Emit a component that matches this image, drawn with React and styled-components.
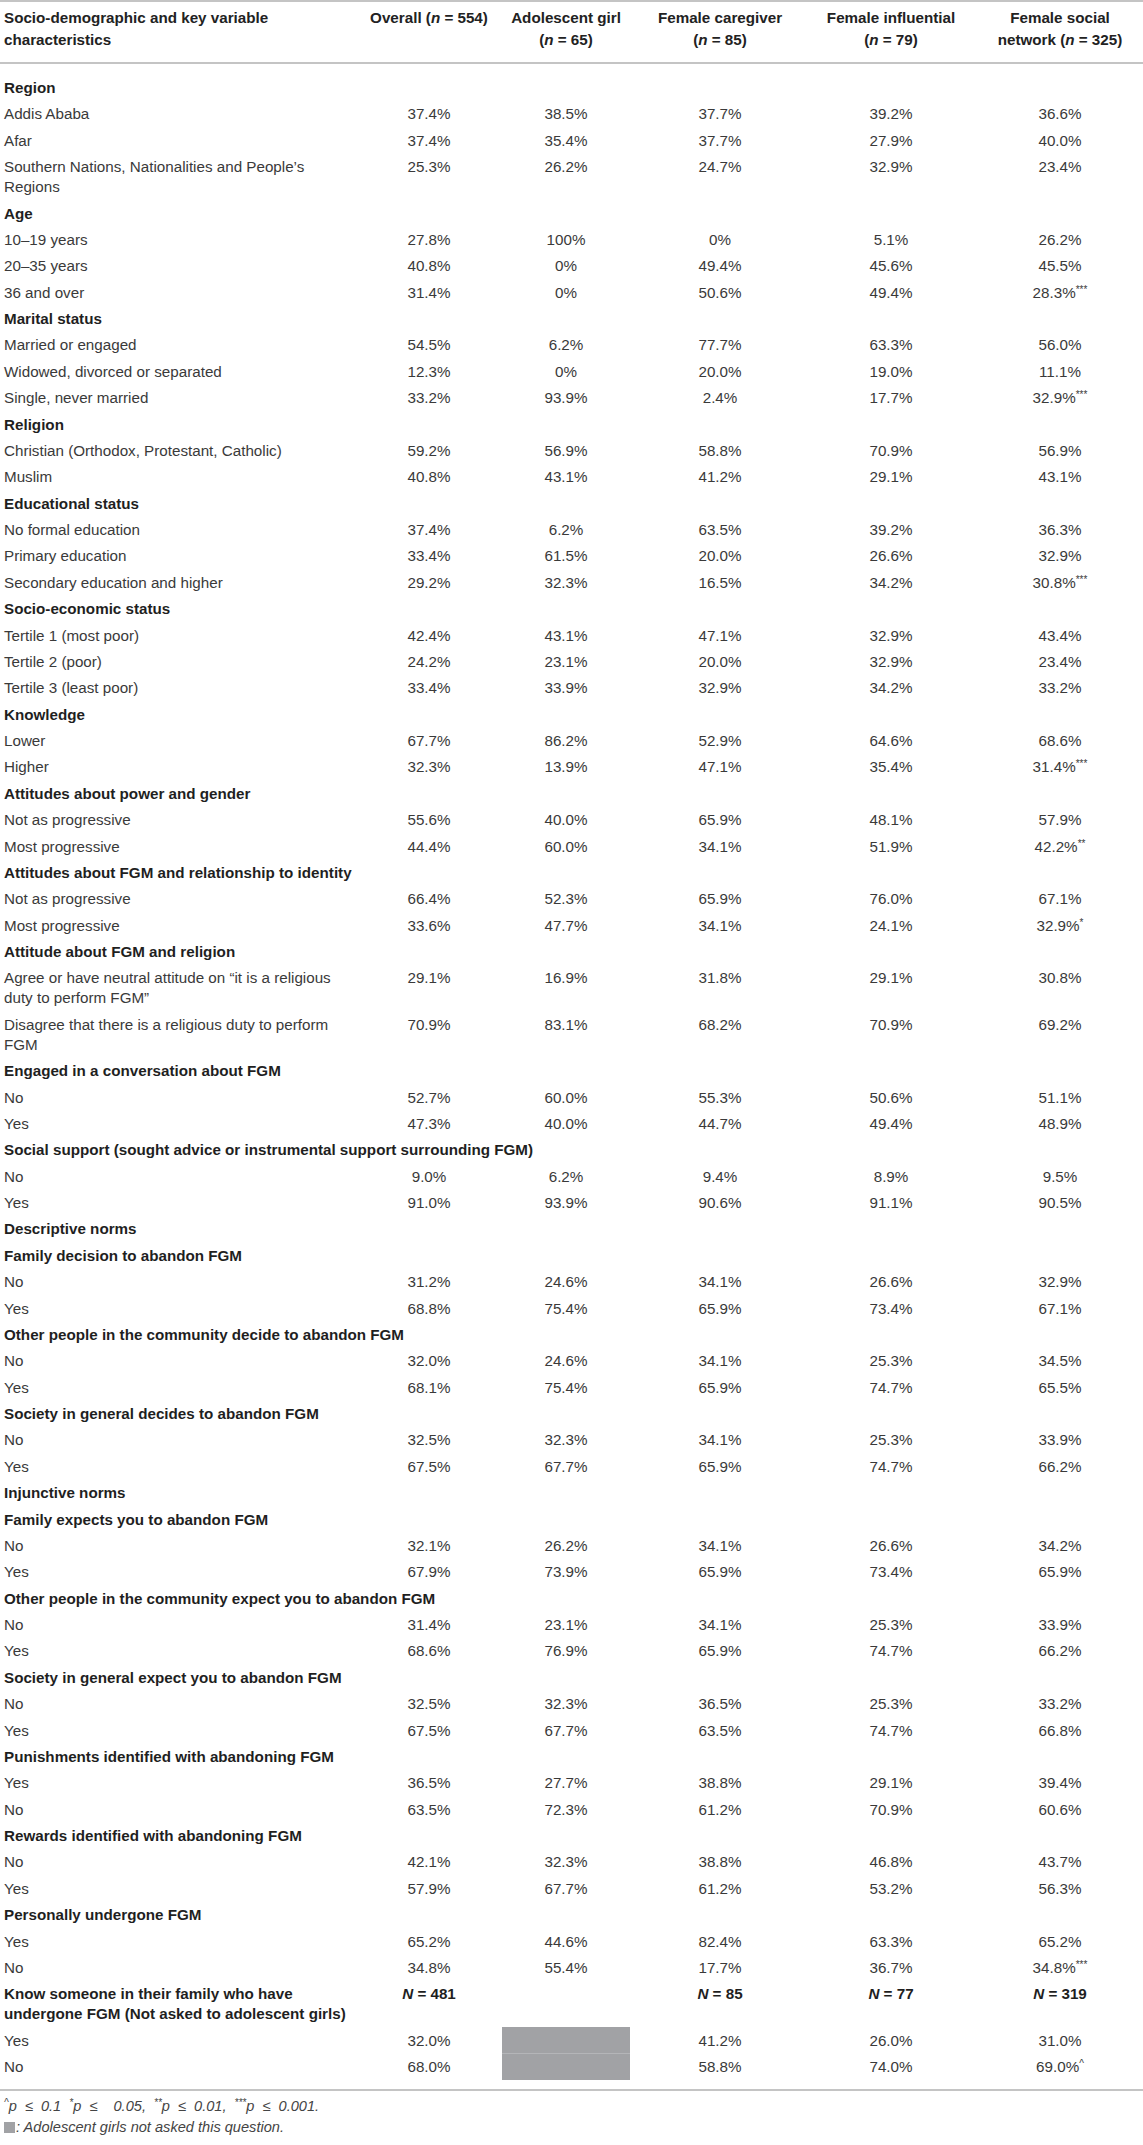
import React from "react";
import styled, { createGlobalStyle } from "styled-components";

const GlobalStyle = createGlobalStyle`
  html, body {
    margin: 0;
    padding: 0;
    background: #fff;
  }
  body {
    font-family: "Liberation Sans", Arial, sans-serif;
    color: #333;
  }
`;

const Page = styled.div`
  width: 1143px;
`;

const Table = styled.table`
  width: 1143px;
  table-layout: fixed;
  border-collapse: collapse;
  font-size: 15.2px;
  tbody tr:first-child td {
    padding-top: 14px;
  }
  tbody tr:last-child td {
    padding-bottom: 9px;
  }
  tbody {
    border-bottom: 2px solid #c4c4c4;
  }
`;

const HeadRow = styled.tr`
  border-top: 2px solid #c4c4c4;
  border-bottom: 2px solid #c4c4c4;
`;

const HeadCell = styled.th`
  font-weight: bold;
  color: #222;
  line-height: 22px;
  padding: 5px 4px 11px;
  vertical-align: top;
  text-align: ${p => (p.left ? "left" : "center")};
  white-space: nowrap;
`;

const Cell = styled.td`
  line-height: 20px;
  padding: 3.2px 4px;
  vertical-align: top;
  text-align: ${p => (p.left ? "left" : "center")};
  white-space: nowrap;
  color: #3a3a3a;
  font-weight: ${p => (p.bold ? "bold" : "normal")};
  ${p => p.bold && "color: #1f1f1f;"}
`;

const ShadeCell = styled.td`
  padding: 0 5px;
  vertical-align: top;
`;

const Shade = styled.div`
  height: 26.4px;
  background: #a1a2a5;
  box-shadow: inset 0 ${p => (p.top ? "-1px" : "0")} 0 #b4b5b8;
`;

const Sup = styled.span`
  font-size: 10px;
  line-height: 0;
  vertical-align: 5px;
`;

const Em = styled.i`
  font-style: italic;
`;

const Notes = styled.div`
  padding: 5px 4px 0;
  font-style: italic;
  font-size: 14.6px;
  line-height: 21px;
  color: #444;
`;

const NoteLine = styled.div`
  word-spacing: ${p => p.spread || 0}px;
`;

const Swatch = styled.span`
  display: inline-block;
  width: 11px;
  height: 11px;
  background: #a1a2a5;
  margin-right: 1px;
  vertical-align: -1px;
`;

const sections = [
  ["Region", [
    ["Addis Ababa", "37.4%", "38.5%", "37.7%", "39.2%", "36.6%"],
    ["Afar", "37.4%", "35.4%", "37.7%", "27.9%", "40.0%"],
    [["Southern Nations, Nationalities and People’s", "Regions"], "25.3%", "26.2%", "24.7%", "32.9%", "23.4%"],
  ]],
  ["Age", [
    ["10–19 years", "27.8%", "100%", "0%", "5.1%", "26.2%"],
    ["20–35 years", "40.8%", "0%", "49.4%", "45.6%", "45.5%"],
    ["36 and over", "31.4%", "0%", "50.6%", "49.4%", "28.3%***"],
  ]],
  ["Marital status", [
    ["Married or engaged", "54.5%", "6.2%", "77.7%", "63.3%", "56.0%"],
    ["Widowed, divorced or separated", "12.3%", "0%", "20.0%", "19.0%", "11.1%"],
    ["Single, never married", "33.2%", "93.9%", "2.4%", "17.7%", "32.9%***"],
  ]],
  ["Religion", [
    ["Christian (Orthodox, Protestant, Catholic)", "59.2%", "56.9%", "58.8%", "70.9%", "56.9%"],
    ["Muslim", "40.8%", "43.1%", "41.2%", "29.1%", "43.1%"],
  ]],
  ["Educational status", [
    ["No formal education", "37.4%", "6.2%", "63.5%", "39.2%", "36.3%"],
    ["Primary education", "33.4%", "61.5%", "20.0%", "26.6%", "32.9%"],
    ["Secondary education and higher", "29.2%", "32.3%", "16.5%", "34.2%", "30.8%***"],
  ]],
  ["Socio-economic status", [
    ["Tertile 1 (most poor)", "42.4%", "43.1%", "47.1%", "32.9%", "43.4%"],
    ["Tertile 2 (poor)", "24.2%", "23.1%", "20.0%", "32.9%", "23.4%"],
    ["Tertile 3 (least poor)", "33.4%", "33.9%", "32.9%", "34.2%", "33.2%"],
  ]],
  ["Knowledge", [
    ["Lower", "67.7%", "86.2%", "52.9%", "64.6%", "68.6%"],
    ["Higher", "32.3%", "13.9%", "47.1%", "35.4%", "31.4%***"],
  ]],
  ["Attitudes about power and gender", [
    ["Not as progressive", "55.6%", "40.0%", "65.9%", "48.1%", "57.9%"],
    ["Most progressive", "44.4%", "60.0%", "34.1%", "51.9%", "42.2%**"],
  ]],
  ["Attitudes about FGM and relationship to identity", [
    ["Not as progressive", "66.4%", "52.3%", "65.9%", "76.0%", "67.1%"],
    ["Most progressive", "33.6%", "47.7%", "34.1%", "24.1%", "32.9%*"],
  ]],
  ["Attitude about FGM and religion", [
    [["Agree or have neutral attitude on “it is a religious", "duty to perform FGM”"], "29.1%", "16.9%", "31.8%", "29.1%", "30.8%"],
    [["Disagree that there is a religious duty to perform", "FGM"], "70.9%", "83.1%", "68.2%", "70.9%", "69.2%"],
  ]],
  ["Engaged in a conversation about FGM", [
    ["No", "52.7%", "60.0%", "55.3%", "50.6%", "51.1%"],
    ["Yes", "47.3%", "40.0%", "44.7%", "49.4%", "48.9%"],
  ]],
  ["Social support (sought advice or instrumental support surrounding FGM)", [
    ["No", "9.0%", "6.2%", "9.4%", "8.9%", "9.5%"],
    ["Yes", "91.0%", "93.9%", "90.6%", "91.1%", "90.5%"],
  ]],
  ["Descriptive norms", []],
  ["Family decision to abandon FGM", [
    ["No", "31.2%", "24.6%", "34.1%", "26.6%", "32.9%"],
    ["Yes", "68.8%", "75.4%", "65.9%", "73.4%", "67.1%"],
  ]],
  ["Other people in the community decide to abandon FGM", [
    ["No", "32.0%", "24.6%", "34.1%", "25.3%", "34.5%"],
    ["Yes", "68.1%", "75.4%", "65.9%", "74.7%", "65.5%"],
  ]],
  ["Society in general decides to abandon FGM", [
    ["No", "32.5%", "32.3%", "34.1%", "25.3%", "33.9%"],
    ["Yes", "67.5%", "67.7%", "65.9%", "74.7%", "66.2%"],
  ]],
  ["Injunctive norms", []],
  ["Family expects you to abandon FGM", [
    ["No", "32.1%", "26.2%", "34.1%", "26.6%", "34.2%"],
    ["Yes", "67.9%", "73.9%", "65.9%", "73.4%", "65.9%"],
  ]],
  ["Other people in the community expect you to abandon FGM", [
    ["No", "31.4%", "23.1%", "34.1%", "25.3%", "33.9%"],
    ["Yes", "68.6%", "76.9%", "65.9%", "74.7%", "66.2%"],
  ]],
  ["Society in general expect you to abandon FGM", [
    ["No", "32.5%", "32.3%", "36.5%", "25.3%", "33.2%"],
    ["Yes", "67.5%", "67.7%", "63.5%", "74.7%", "66.8%"],
  ]],
  ["Punishments identified with abandoning FGM", [
    ["Yes", "36.5%", "27.7%", "38.8%", "29.1%", "39.4%"],
    ["No", "63.5%", "72.3%", "61.2%", "70.9%", "60.6%"],
  ]],
  ["Rewards identified with abandoning FGM", [
    ["No", "42.1%", "32.3%", "38.8%", "46.8%", "43.7%"],
    ["Yes", "57.9%", "67.7%", "61.2%", "53.2%", "56.3%"],
  ]],
  ["Personally undergone FGM", [
    ["Yes", "65.2%", "44.6%", "82.4%", "63.3%", "65.2%"],
    ["No", "34.8%", "55.4%", "17.7%", "36.7%", "34.8%***"],
  ]],
];

const lastRows = [
  ["Yes", "32.0%", null, "41.2%", "26.0%", "31.0%"],
  ["No", "68.0%", null, "58.8%", "74.0%", "69.0%^"],
];

// splits a value like "28.3%***" into number and superscript marks
const Value = ({ text }) => {
  const m = text.match(/^([^*^]*)([*^]*)$/);
  return (
    <>
      {m[1]}
      {m[2] && <Sup>{m[2]}</Sup>}
    </>
  );
};

const Label = ({ text }) =>
  Array.isArray(text) ? (
    <>
      {text[0]}
      <br />
      {text[1]}
    </>
  ) : (
    text
  );

const DataRow = ({ row }) => (
  <tr>
    <Cell left>
      <Label text={row[0]} />
    </Cell>
    {row.slice(1).map((v, i) => (
      <Cell key={i}>
        <Value text={v} />
      </Cell>
    ))}
  </tr>
);

const NCell = ({ n }) => (
  <Cell bold>
    <Em>N</Em> = {n}
  </Cell>
);

export default function App() {
  return (
    <Page>
      <GlobalStyle />
      <Table>
        <colgroup>
          <col style={{ width: 361 }} />
          <col style={{ width: 136 }} />
          <col style={{ width: 138 }} />
          <col style={{ width: 170 }} />
          <col style={{ width: 172 }} />
          <col style={{ width: 166 }} />
        </colgroup>
        <thead>
          <HeadRow>
            <HeadCell left>
              Socio-demographic and key variable
              <br />
              characteristics
            </HeadCell>
            <HeadCell>
              Overall (<Em>n</Em> = 554)
            </HeadCell>
            <HeadCell>
              Adolescent girl
              <br />(<Em>n</Em> = 65)
            </HeadCell>
            <HeadCell>
              Female caregiver
              <br />(<Em>n</Em> = 85)
            </HeadCell>
            <HeadCell>
              Female influential
              <br />(<Em>n</Em> = 79)
            </HeadCell>
            <HeadCell>
              Female social
              <br />
              network (<Em>n</Em> = 325)
            </HeadCell>
          </HeadRow>
        </thead>
        <tbody>
          {sections.map(([title, rows]) => (
            <React.Fragment key={title}>
              <tr>
                <Cell left bold colSpan={6}>
                  {title}
                </Cell>
              </tr>
              {rows.map((row, i) => (
                <DataRow key={i} row={row} />
              ))}
            </React.Fragment>
          ))}
          <tr>
            <Cell left bold>
              Know someone in their family who have
              <br />
              undergone FGM (Not asked to adolescent girls)
            </Cell>
            <NCell n="481" />
            <Cell />
            <NCell n="85" />
            <NCell n="77" />
            <NCell n="319" />
          </tr>
          {lastRows.map((row, r) => (
            <tr key={r}>
              <Cell left>{row[0]}</Cell>
              <Cell>
                <Value text={row[1]} />
              </Cell>
              <ShadeCell>
                <Shade top={r === 0} />
              </ShadeCell>
              {row.slice(3).map((v, i) => (
                <Cell key={i}>
                  <Value text={v} />
                </Cell>
              ))}
            </tr>
          ))}
        </tbody>
      </Table>
      <Notes>
        <NoteLine spread={4}>
          <Sup>^</Sup>
          <Em>p</Em> ≤ 0.1 <Sup>*</Sup>
          <Em>p</Em> ≤&nbsp; 0.05, <Sup>**</Sup>
          <Em>p</Em> ≤ 0.01, <Sup>***</Sup>
          <Em>p</Em> ≤ 0.001.
        </NoteLine>
        <NoteLine>
          <Swatch />: Adolescent girls not asked this question.
        </NoteLine>
      </Notes>
    </Page>
  );
}
